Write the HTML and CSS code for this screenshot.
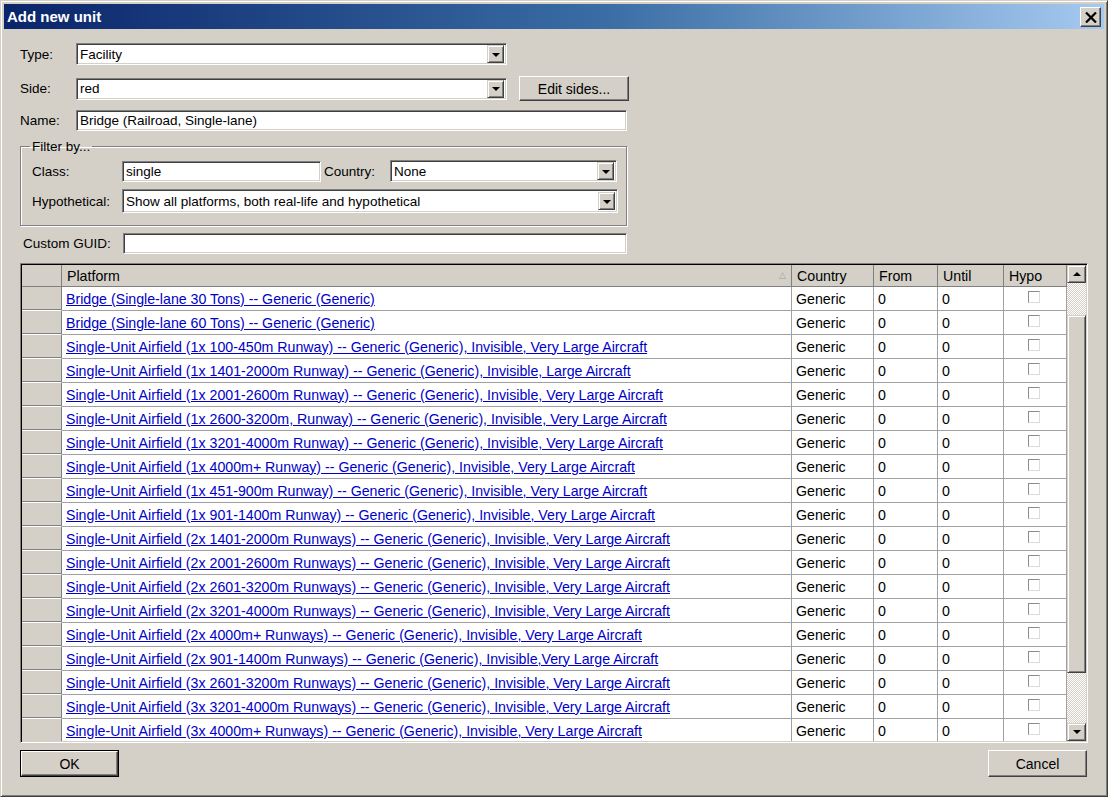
FILE: index.html
```html
<!DOCTYPE html>
<html>
<head>
<meta charset="utf-8">
<link rel="stylesheet" href="styles.css">
</head>
<body>
<div class="window">
  <div class="titlebar">
    <span class="title">Add new unit</span>
    <span class="close"><svg width="12" height="11" viewBox="0 0 12 11"><path d="M1 0.5 L11 10.5 M11 0.5 L1 10.5" stroke="#000" stroke-width="2.2" fill="none"/></svg></span>
  </div>
  <div class="content">
    <div class="row r-type">
      <span class="lbl">Type:</span>
      <div class="field select w-main"><span class="val">Facility</span><span class="arrow"></span></div>
    </div>
    <div class="row r-side">
      <span class="lbl">Side:</span>
      <div class="field select w-main"><span class="val">red</span><span class="arrow"></span></div>
      <div class="btn btn-edit">Edit sides...</div>
    </div>
    <div class="row r-name">
      <span class="lbl">Name:</span>
      <div class="field w-name"><span class="val">Bridge (Railroad, Single-lane)</span></div>
    </div>
    <fieldset class="group">
      <legend>Filter by...</legend>
      <div class="grow g-class">
        <span class="glbl">Class:</span>
        <div class="field w-class"><span class="val">single</span></div>
        <span class="clbl">Country:</span>
        <div class="field select w-country"><span class="val">None</span><span class="arrow"></span></div>
      </div>
      <div class="grow g-hypo">
        <span class="glbl">Hypothetical:</span>
        <div class="field select w-hypo"><span class="val">Show all platforms, both real-life and hypothetical</span><span class="arrow"></span></div>
      </div>
    </fieldset>
    <div class="row r-guid">
      <span class="lbl lbl-guid">Custom GUID:</span>
      <div class="field w-guid"></div>
    </div>
    <div class="table">
      <div class="grid" id="grid">
        <div class="hc hc-rh"></div>
        <div class="hc hc-plat">Platform<span class="sort">&#9651;</span></div>
        <div class="hc">Country</div>
        <div class="hc">From</div>
        <div class="hc">Until</div>
        <div class="hc">Hypo</div>
      </div>
      <div class="scroll">
        <div class="sbtn"><span class="tri up"></span></div>
        <div class="track t1"></div>
        <div class="thumb"></div>
        <div class="track t2"></div>
        <div class="sbtn"><span class="tri down"></span></div>
      </div>
    </div>
    <div class="bottom">
      <div class="btn btn-ok"><span>OK</span></div>
      <div class="btn btn-cancel">Cancel</div>
    </div>
  </div>
</div>
<script src="script.js"></script>
</body>
</html>
```

FILE: script.js
```js
var rows = [
"Bridge (Single-lane 30 Tons) -- Generic (Generic)",
"Bridge (Single-lane 60 Tons) -- Generic (Generic)",
"Single-Unit Airfield (1x 100-450m Runway) -- Generic (Generic), Invisible, Very Large Aircraft",
"Single-Unit Airfield (1x 1401-2000m Runway) -- Generic (Generic), Invisible, Large Aircraft",
"Single-Unit Airfield (1x 2001-2600m Runway) -- Generic (Generic), Invisible, Very Large Aircraft",
"Single-Unit Airfield (1x 2600-3200m, Runway) -- Generic (Generic), Invisible, Very Large Aircraft",
"Single-Unit Airfield (1x 3201-4000m Runway) -- Generic (Generic), Invisible, Very Large Aircraft",
"Single-Unit Airfield (1x 4000m+ Runway) -- Generic (Generic), Invisible, Very Large Aircraft",
"Single-Unit Airfield (1x 451-900m Runway) -- Generic (Generic), Invisible, Very Large Aircraft",
"Single-Unit Airfield (1x 901-1400m Runway) -- Generic (Generic), Invisible, Very Large Aircraft",
"Single-Unit Airfield (2x 1401-2000m Runways) -- Generic (Generic), Invisible, Very Large Aircraft",
"Single-Unit Airfield (2x 2001-2600m Runways) -- Generic (Generic), Invisible, Very Large Aircraft",
"Single-Unit Airfield (2x 2601-3200m Runways) -- Generic (Generic), Invisible, Very Large Aircraft",
"Single-Unit Airfield (2x 3201-4000m Runways) -- Generic (Generic), Invisible, Very Large Aircraft",
"Single-Unit Airfield (2x 4000m+ Runways) -- Generic (Generic), Invisible, Very Large Aircraft",
"Single-Unit Airfield (2x 901-1400m Runways) -- Generic (Generic), Invisible,Very Large Aircraft",
"Single-Unit Airfield (3x 2601-3200m Runways) -- Generic (Generic), Invisible, Very Large Aircraft",
"Single-Unit Airfield (3x 3201-4000m Runways) -- Generic (Generic), Invisible, Very Large Aircraft",
"Single-Unit Airfield (3x 4000m+ Runways) -- Generic (Generic), Invisible, Very Large Aircraft"
];
var g = document.getElementById('grid');
var html = '';
rows.forEach(function (r) {
  html += '<div class="c c-rh"></div>' +
    '<div class="c c-plat"><a>' + r + '</a></div>' +
    '<div class="c">Generic</div>' +
    '<div class="c">0</div>' +
    '<div class="c">0</div>' +
    '<div class="c c-hypo"><span class="chk"></span></div>';
});
g.insertAdjacentHTML('beforeend', html);
```

FILE: styles.css
```css
* { box-sizing: border-box; }
html, body { margin: 0; padding: 0; background: #d4d0c8; }
body {
  font-family: "Liberation Sans", Arial, sans-serif;
  font-size: 13.5px;
  color: #000;
}
.window {
  width: 1108px;
  height: 797px;
  background: #d4d0c8;
  border-top: 1px solid #d4d0c8;
  border-left: 1px solid #d4d0c8;
  border-right: 1px solid #404040;
  border-bottom: 1px solid #404040;
  box-shadow: inset 1px 1px 0 #fff, inset -1px -1px 0 #808080;
  padding: 3px 3px 3px 3px;
  display: flex;
  flex-direction: column;
  overflow: hidden;
}
.titlebar {
  height: 25px;
  background: linear-gradient(to right, #0a246a 0%, #3a6ea5 55%, #a6caf0 100%);
  display: flex;
  align-items: center;
  justify-content: space-between;
  padding: 0 3px 0 3px;
  flex-shrink: 0;
}
.title {
  color: #fff;
  font-weight: bold;
  font-size: 15px;
}
.close {
  width: 21px;
  height: 20px;
  background: #d4d0c8;
  border-top: 1px solid #fff;
  border-left: 1px solid #fff;
  border-right: 1px solid #404040;
  border-bottom: 1px solid #404040;
  box-shadow: inset -1px -1px 0 #808080;
  display: flex;
  align-items: center;
  justify-content: center;
  margin-top: 1px;
}
.content {
  padding: 14px 0 0 16px;
  display: flex;
  flex-direction: column;
}
.row { display: flex; align-items: center; }
.lbl { width: 56px; }
.field {
  background: #fff;
  border-top: 1px solid #808080;
  border-left: 1px solid #808080;
  border-right: 1px solid #fff;
  border-bottom: 1px solid #fff;
  box-shadow: inset 1px 1px 0 #404040, inset -1px -1px 0 #d4d0c8;
  display: flex;
  align-items: center;
  position: relative;
  padding-left: 3px;
}
.val { white-space: nowrap; }
.select { padding-right: 0; justify-content: space-between; }
.arrow {
  width: 17px;
  height: 18px;
  margin-right: 2px;
  background: #d4d0c8;
  border-top: 1px solid #d4d0c8;
  border-left: 1px solid #d4d0c8;
  border-right: 1px solid #404040;
  border-bottom: 1px solid #404040;
  box-shadow: inset 1px 1px 0 #fff, inset -1px -1px 0 #808080;
  display: flex;
  align-items: center;
  justify-content: center;
  flex-shrink: 0;
}
.arrow::after {
  content: "";
  width: 0; height: 0;
  border-left: 4px solid transparent;
  border-right: 4px solid transparent;
  border-top: 4px solid #000;
  margin-top: 1px;
}
.r-type { height: 22px; }
.r-type .field { height: 22px; }
.w-main { width: 431px; }
.r-side { margin-top: 11px; height: 25px; }
.r-side .field { height: 22px; }
.btn {
  background: #d4d0c8;
  border-top: 1px solid #fff;
  border-left: 1px solid #fff;
  border-right: 1px solid #404040;
  border-bottom: 1px solid #404040;
  box-shadow: inset -1px -1px 0 #808080;
  display: flex;
  align-items: center;
  justify-content: center;
}
.btn-edit { width: 110px; height: 25px; margin-left: 12px; font-size: 14px; }
.r-name { margin-top: 9px; height: 21px; }
.w-name { width: 551px; height: 21px; }

.group {
  margin: 9px 0 0 0;
  width: 607px;
  height: 86px;
  border: 1px solid #808080;
  box-shadow: 1px 1px 0 #fff, inset 1px 1px 0 #fff;
  padding: 0 0 0 11px;
  min-width: 0;
}
.group legend {
  padding: 0 2px;
  margin-left: -2px;
  line-height: 13px;
}
.grow { display: flex; align-items: center; }
.glbl { width: 90px; }
.g-class { margin-top: 7px; height: 22px; }
.w-class { width: 199px; height: 21px; }
.clbl { width: 69px; padding-left: 3px; }
.w-country { width: 227px; height: 22px; }
.g-hypo { margin-top: 7px; height: 24px; }
.w-hypo { width: 496px; height: 24px; }

.r-guid { margin-top: 7px; height: 21px; }
.lbl-guid { width: 103px; padding-left: 3px; }
.w-guid { width: 504px; height: 21px; }

.table {
  margin-top: 9px;
  width: 1068px;
  height: 480px;
  border-top: 1px solid #808080;
  border-left: 1px solid #808080;
  border-right: 1px solid #fff;
  border-bottom: 1px solid #fff;
  box-shadow: inset 1px 1px 0 #000, inset -1px -1px 0 #d4d0c8;
  padding: 1px;
  display: flex;
  overflow: hidden;
  background: #fff;
  font-size: 14.2px;
}
.grid {
  display: grid;
  grid-template-columns: 40px 730px 82px 64px 66px 63px;
  grid-auto-rows: 24px;
  grid-template-rows: 22px;
  width: 1045px;
  height: 476px;
  overflow: hidden;
  align-content: start;
}
.hc {
  background: #d4d0c8;
  border-right: 1px solid #808080;
  border-bottom: 1px solid #808080;
  padding-left: 5px;
  padding-top: 1px;
  display: flex;
  align-items: center;
  white-space: nowrap;
}
.hc-plat { position: relative; }
.sort {
  position: absolute;
  right: 5px;
  top: 5px;
  font-size: 9px;
  color: #a0a0a0;
}
.c {
  border-right: 1px solid #a0a0a0;
  border-bottom: 1px solid #a0a0a0;
  padding-left: 4px;
  display: flex;
  align-items: center;
  white-space: nowrap;
  overflow: hidden;
}
.c-rh { background: #d4d0c8; border-right-color: #808080; border-bottom-color: #fff; box-shadow: inset 0 -1px 0 #808080; }
.c-plat a { color: #0000c8; text-decoration: underline; }
.c-hypo { justify-content: center; padding-left: 0; padding-right: 3px; }
.chk {
  width: 12px;
  height: 12px;
  border-top: 1px solid #8c8c8c;
  border-left: 1px solid #8c8c8c;
  border-right: 1px solid #dcdcdc;
  border-bottom: 1px solid #dcdcdc;
  margin-top: -3px;
}
.scroll {
  width: 19px;
  height: 476px;
  display: flex;
  flex-direction: column;
  background: #d4d0c8;
}
.sbtn {
  height: 18px;
  background: #d4d0c8;
  border-top: 1px solid #d4d0c8;
  border-left: 1px solid #d4d0c8;
  border-right: 1px solid #404040;
  border-bottom: 1px solid #404040;
  box-shadow: inset 1px 1px 0 #fff, inset -1px -1px 0 #808080;
  display: flex;
  align-items: center;
  justify-content: center;
  flex-shrink: 0;
}
.tri { width: 0; height: 0; border-left: 4px solid transparent; border-right: 4px solid transparent; }
.tri.up { border-bottom: 4px solid #000; }
.tri.down { border-top: 4px solid #000; }
.track {
  background-color: #eeeeee;
  background-image: repeating-conic-gradient(#d4d0c8 0 25%, #ffffff 0 50%);
  background-size: 2px 2px;
}
.t1 { height: 32px; }
.t2 { height: 50px; }
.thumb {
  flex: 1;
  background: #d4d0c8;
  border-top: 1px solid #d4d0c8;
  border-left: 1px solid #d4d0c8;
  border-right: 1px solid #404040;
  border-bottom: 1px solid #404040;
  box-shadow: inset 1px 1px 0 #fff, inset -1px -1px 0 #808080;
}
.bottom {
  display: flex;
  justify-content: space-between;
  width: 1067px;
  margin-top: 7px;
  font-size: 14px;
}
.btn-ok {
  width: 99px;
  height: 27px;
  border: 1px solid #000;
  box-shadow: none;
  padding: 0;
}
.btn-ok span {
  width: 100%;
  height: 100%;
  display: flex;
  align-items: center;
  justify-content: center;
  border-top: 1px solid #fff;
  border-left: 1px solid #fff;
  border-right: 1px solid #404040;
  border-bottom: 1px solid #404040;
  box-shadow: inset -1px -1px 0 #808080;
}
.btn-cancel { width: 99px; height: 27px; }
```
